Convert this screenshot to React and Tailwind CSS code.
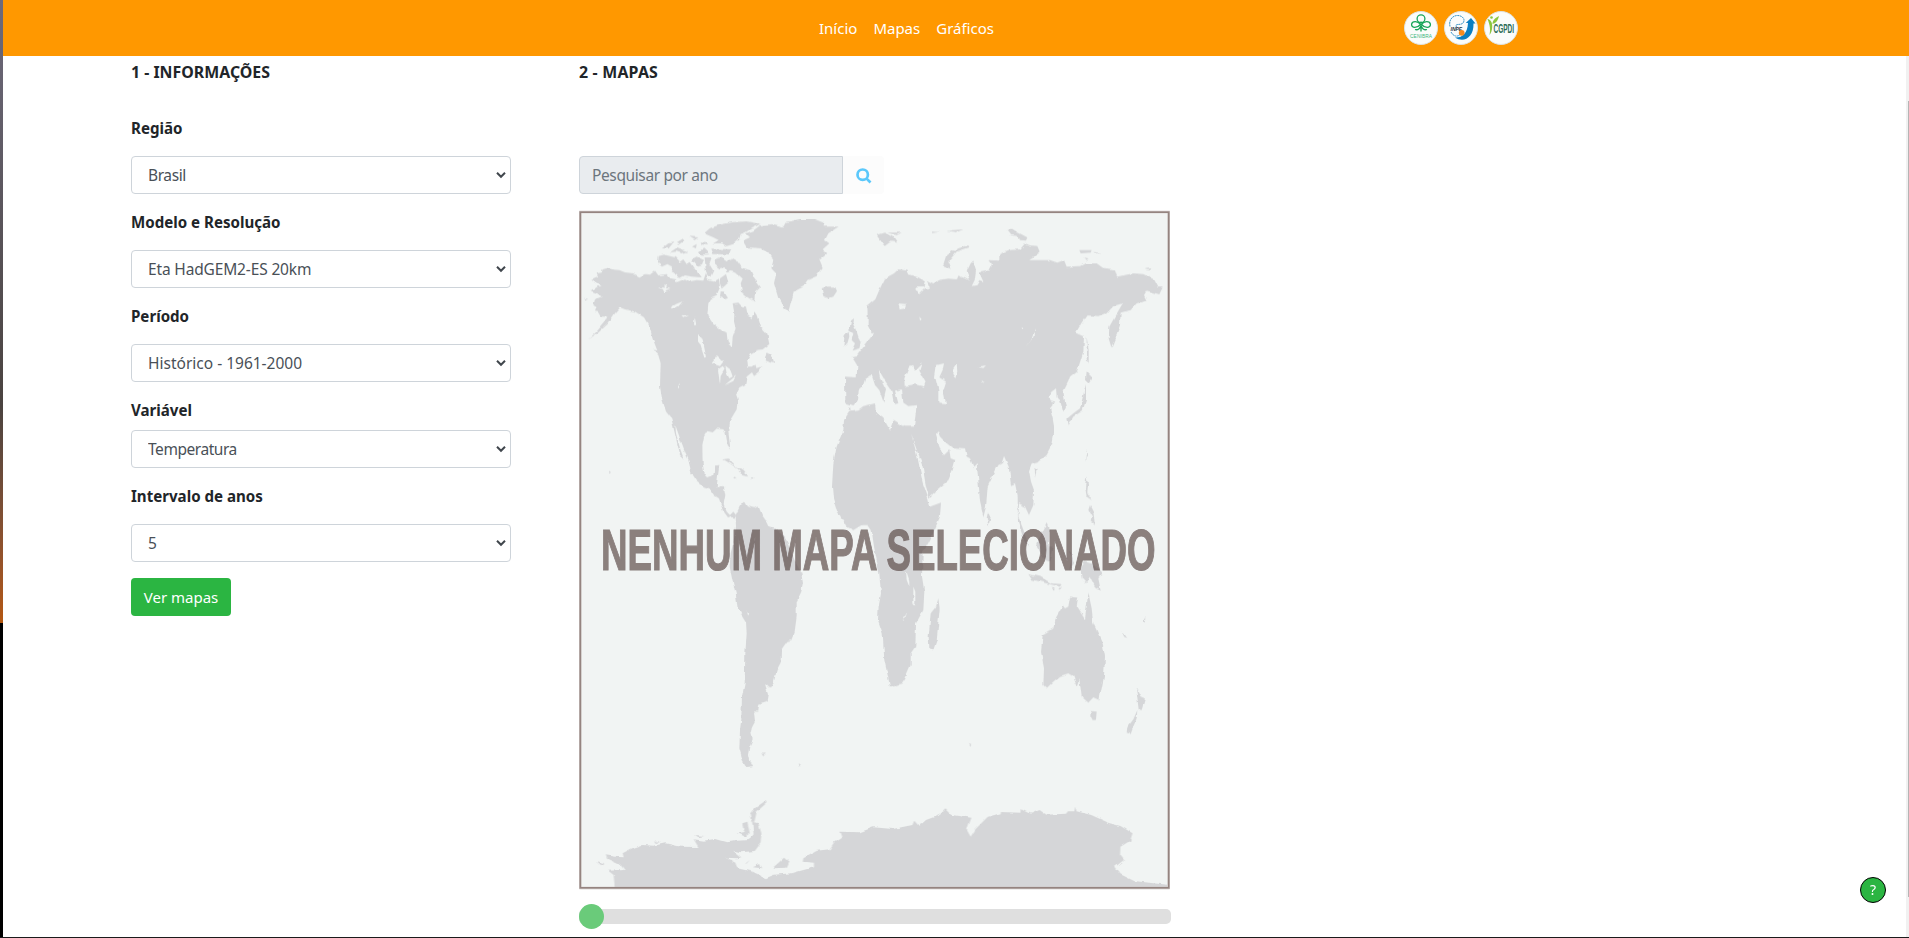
import React from "react";

const fields = [
  { label: "Região", value: "Brasil", gap: "mt-4", tracking: "tracking-[-0.4px]" },
  { label: "Modelo e Resolução", value: "Eta HadGEM2-ES 20km", gap: "mt-4", tracking: "tracking-[-0.15px]" },
  { label: "Período", value: "Histórico - 1961-2000", gap: "mt-4", tracking: "tracking-[0px]" },
  { label: "Variável", value: "Temperatura", gap: "mt-2", tracking: "tracking-[-0.45px]" },
  { label: "Intervalo de anos", value: "5", gap: "mt-4", tracking: "tracking-[0px]" },
];

function Field({ label, value, gap, tracking }) {
  return (
    <div className="mb-4 flex flex-col">
      <label className="h-6 text-[15.1px] font-bold leading-[25px] text-[#212529]">{label}</label>
      <div className={"grid h-[38px] items-center " + gap}>
        <select
          defaultValue={value}
          className={"col-start-1 row-start-1 h-[38px] w-full appearance-none rounded border border-[#ced4da] bg-white pl-4 pt-0.5 text-[15.5px] text-[#495057] " + tracking}
        >
          <option>{value}</option>
        </select>
        <svg className="pointer-events-none col-start-1 row-start-1 mr-[5px] justify-self-end" width="10" height="8" viewBox="0 0 10 8" fill="none" stroke="#40464c" strokeWidth="2">
          <path d="M1 1.8 5 5.8 9 1.8" />
        </svg>
      </div>
    </div>
  );
}

function CenibraLogo() {
  return (
    <svg width="34" height="34" viewBox="0 0 34 34">
      <circle cx="17" cy="17" r="16.5" fill="#fbfcfb" stroke="#dfe3e0" />
      <g fill="none" stroke="#17a559" strokeWidth="1.3">
        <circle cx="17" cy="7.8" r="3.9" />
        <path d="M16.5 13.5C14 9.8 8.2 9.7 7.6 13.2 7.3 17.4 13.2 17.3 16.5 13.500ZM17.5 13.500C20 9.800 25.800 9.700 26.400 13.200 26.700 17.400 20.800 17.300 17.500 13.500Z" />
        <path d="M17 10.500v10M11 18.500c3 1 5.200-1 6-4 .8 3 3 5 6 4" />
      </g>
      <text x="6" y="26.500" fontFamily="Liberation Sans, sans-serif" fontSize="4.800" fill="#3bb57b" textLength="22">CENIBRA</text>
    </svg>
  );
}

function InpeLogo() {
  return (
    <svg width="34" height="34" viewBox="0 0 34 34">
      <circle cx="17" cy="17" r="16.5" fill="#fbfcfb" stroke="#dfe3e0" />
      <path d="M11 26.500c7 .5 12.500-4 13-14.500h-2.200L27 7l4.500 5.500h-2C30 27 19.500 32 11 26.500Z" fill="#0b7fc2" />
      <path d="M6 15.500C4.500 9 8.500 4.500 13.500 4.500c5.500 0 8.500 4.500 5 8-3 2-8-.5-6 3.500M7 21c2 4 6 5.500 9 2.500" fill="none" stroke="#3a95c8" strokeWidth="1" strokeDasharray="2 .5" />
      <text x="6.500" y="19.800" fontFamily="Liberation Sans, sans-serif" fontWeight="700" fontStyle="italic" fontSize="5" fill="#22303a">INPE</text>
      <circle cx="17.700" cy="21.800" r="2.900" fill="#f58b1f" />
    </svg>
  );
}

function CgpdiLogo() {
  return (
    <svg width="34" height="34" viewBox="0 0 34 34" className="overflow-visible">
      <circle cx="17" cy="17" r="16.5" fill="#fbfcfb" stroke="#dfe3e0" />
      <path d="M3.500 8c3.500.5 5 4 4.700 8C8 20 7 22 5.500 24c1-5 .8-9-2-16ZM8.500 13c0-3.500 3-6.500 6.500-8-1 4-2.500 7-6.500 8Z" fill="#8cc63f" />
      <circle cx="7.500" cy="6.500" r="1.300" fill="#8cc63f" />
      <text x="9.500" y="22" fontFamily="Liberation Sans, sans-serif" fontWeight="700" fontSize="13" fill="#2b6b56" textLength="20.500" lengthAdjust="spacingAndGlyphs">CGPDI</text>
    </svg>
  );
}

function WorldMap() {
  return (
    <svg className="block overflow-visible" width="592" height="680" viewBox="27 30 1776 2040" role="img">
      <defs>
        <filter id="coast" x="0" y="0" width="1" height="1">
          <feTurbulence type="fractalNoise" baseFrequency="0.045" numOctaves="2" seed="4" result="n" />
          <feDisplacementMap in="SourceGraphic" in2="n" scale="11" xChannelSelector="R" yChannelSelector="G" />
        </filter>
      </defs>
      <rect x="31" y="36" width="1766" height="2032" fill="#f1f4f3" />
      <g filter="url(#coast)">
      <g fill="#d5d6d8">
        <path d="M64 240 84 232 80 220 95 218 98 208 112 204 130 209 148 210 165 217 190 220 208 230 225 222 240 224 255 212 265 226 290 222 300 234 318 238 320 247 345 236 360 244 380 240 400 242 408 218 415 240 432 245 447 236 450 262 440 285 425 292 415 310 412 345 430 372 455 390 470 398 473 425 486 440 488 410 497 385 492 365 493 340 488 310 505 308 515 318 528 320 533 345 545 357 553 335 560 345 570 378 592 404 598 432 578 448 560 450 543 460 530 485 545 470 560 462 553 485 560 505 577 500 568 516 552 528 546 517 530 530 526 553 508 562 498 582 503 596 500 628 487 650 476 668 475 695 481 745 473 735 467 700 460 688 440 686 428 697 412 693 402 710 397 735 398 790 403 820 414 832 430 826 434 797 448 795 440 860 462 862 466 885 461 912 470 935 480 945 490 935 498 945 494 960 485 948 474 952 458 930 447 895 432 885 418 865 402 860 380 842 362 815 356 780 345 755 330 715 316 675 318 700 330 745 341 775 330 765 318 715 304 655 288 635 276 595 270 560 272 490 265 465 250 448 262 452 250 420 238 380 222 352 195 335 165 328 150 322 135 340 115 370 85 398 55 418 80 395 105 365 112 350 92 350 84 336 75 335 80 322 70 315 75 298 95 290 82 280 62 272 80 260 95 258Z" />
        <path d="M266 168 282 164 315 172 328 186 340 178 350 192 362 186 378 210 392 232 365 230 345 226 330 234 320 222 302 215 306 200 292 192 276 200 264 190Z M364 178 380 170 402 180 396 196 384 200 374 186Z M404 172 425 172 418 192 430 212 420 232 408 215Z M434 178 452 172 470 184 495 174 515 202 542 212 552 235 570 260 555 275 553 305 530 290 516 278 512 250 518 236 498 218 482 214 470 218 464 202 448 205 436 195Z M450 235 468 222 475 248 455 266 450 250Z M452 274 462 275 474 294 464 298 450 293Z M385 155 400 146 418 163 395 164Z M424 146 484 148 478 163 430 162Z M276 145 295 130 310 128 296 145Z M300 157 322 142 355 155 336 160 320 155Z M318 126 336 116 340 124 328 132Z M358 110 385 112 374 120Z M366 140 380 132 378 145Z M392 125 408 126 414 136 395 133Z M402 100 420 84 450 74 490 66 530 64 572 72 545 84 528 96 512 102 508 116 490 132 470 138 456 130 430 130 446 120 430 112Z" />
        <path d="M518 122 540 112 528 100 550 92 570 76 610 72 640 80 648 66 690 58 735 58 760 68 758 80 806 80 775 100 765 120 778 130 758 148 772 160 748 180 758 205 740 228 712 240 700 260 672 275 665 300 656 335 640 322 625 295 612 250 618 220 604 205 610 180 596 158 575 145 530 142Z" />
        <path d="M755 265 770 260 795 260 801 273 790 290 775 295 760 288Z M42 294 54 297 48 300Z M843 362 852 355 850 374 860 395 872 430 868 445 845 452 855 430 845 420 850 400 838 392Z M824 405 836 392 838 410 832 430 820 438Z M590 455 604 462 612 490 596 486 584 482Z M460 778 474 776 502 805 520 812 535 830 517 826 500 804 480 790Z M490 830 500 833 492 836Z M542 832 551 833 546 837Z M118 808 122 818 118 823Z" />
        <path d="M497 945 510 918 522 905 530 918 555 925 566 920 576 945 590 965 596 978 612 985 645 1010 665 1060 678 1090 694 1118 699 1150 694 1175 680 1205 680 1250 674 1295 664 1320 652 1323 633 1350 632 1388 620 1410 607 1458 597 1462 585 1452 594 1480 590 1502 567 1512 565 1535 552 1535 555 1565 546 1582 541 1603 549 1615 538 1640 534 1665 538 1685 551 1698 530 1702 518 1680 508 1645 510 1590 514 1558 516 1490 524 1450 526 1360 530 1300 528 1265 503 1225 497 1180 487 1140 479 1100 482 1060 492 1020 498 980Z M574 1662 588 1660 580 1668Z M686 1690 694 1695 688 1698Z" />
        <path d="M893 345 892 318 916 298 930 265 945 235 972 220 985 208 1012 212 1018 224 1045 232 1065 245 1060 262 1035 262 1048 282 1065 265 1080 264 1070 240 1090 250 1108 240 1135 236 1160 238 1165 224 1185 232 1200 240 1190 215 1202 190 1210 182 1218 210 1214 240 1205 258 1220 255 1228 240 1240 245 1228 218 1258 212 1266 195 1255 180 1288 182 1288 162 1315 150 1350 148 1365 130 1380 136 1405 138 1412 155 1378 180 1440 180 1462 188 1482 180 1490 200 1530 198 1545 190 1580 190 1600 204 1635 208 1642 230 1690 220 1720 222 1752 238 1765 262 1778 262 1768 283 1730 272 1722 285 1730 302 1700 310 1682 330 1652 338 1650 375 1640 402 1624 442 1616 415 1618 380 1632 355 1658 310 1630 318 1612 338 1585 348 1550 346 1535 368 1518 398 1542 408 1540 455 1522 512 1500 530 1495 545 1480 575 1488 622 1480 638 1470 600 1460 590 1458 565 1445 575 1435 590 1443 602 1456 605 1440 625 1448 655 1454 690 1447 730 1430 762 1405 785 1385 790 1377 812 1383 845 1392 870 1390 915 1377 945 1365 920 1347 910 1345 950 1368 1010 1375 1040 1360 1015 1344 965 1343 890 1335 850 1323 855 1316 800 1302 768 1295 790 1285 795 1270 825 1253 860 1248 920 1240 952 1230 905 1225 840 1220 790 1210 800 1200 775 1190 770 1185 745 1145 742 1128 728 1110 710 1102 690 1098 705 1108 740 1122 765 1138 750 1142 775 1156 780 1148 810 1135 840 1100 870 1078 893 1068 860 1058 800 1035 735 1022 695 1042 770 1058 848 1075 895 1080 920 1113 908 1110 950 1085 1010 1058 1060 1056 1130 1063 1175 1060 1230 1038 1270 1036 1340 1022 1360 1022 1395 1005 1435 995 1450 960 1462 954 1430 943 1380 938 1300 924 1260 926 1220 933 1180 928 1120 912 1040 905 990 895 975 875 975 850 990 830 980 812 950 798 925 789 895 786 860 790 790 800 740 820 690 822 660 838 635 862 632 880 618 915 610 918 638 940 655 960 690 972 660 1005 680 1032 680 1040 615 1015 618 1000 608 996 568 975 572 985 610 972 612 965 575 945 545 926 512 930 535 948 570 940 605 928 570 915 555 905 525 885 538 878 560 866 572 864 600 850 616 826 608 825 530 860 532 862 500 845 472 860 468 870 455 900 415 912 400 908 370 918 348 928 360 926 390 950 385 946 350 960 310 972 280 985 268 988 290 970 315 975 340 1010 335 972 350 970 385 955 402 938 405 920 398 905 400 893 375Z" />
        <path d="M840 618 842 632 835 628Z M920 105 945 98 970 110 982 128 962 125 944 138 930 120Z M955 98 995 98 980 105Z M1088 92 1110 93 1090 96Z M1130 92 1180 88 1160 96Z M1118 200 1128 168 1155 148 1195 136 1198 142 1160 155 1135 185 1145 210Z M1310 92 1325 86 1345 98 1372 112 1368 122 1350 120 1345 108 1320 105Z M1528 150 1565 150 1562 158 1532 160Z M1570 156 1592 158 1575 160Z M1540 173 1556 176 1548 180Z M1725 204 1745 202 1740 208Z M1550 410 1556 450 1556 490 1550 475Z M1550 515 1566 532 1556 548 1548 540Z M1548 552 1548 600 1538 632 1510 650 1496 675 1492 655 1510 640 1530 625Z M1549 750 1551 765 1546 785Z M1390 805 1400 810 1395 832Z M1549 830 1554 850 1552 880 1565 900 1550 890 1545 860Z M1254 935 1262 955 1256 978 1250 955Z M1105 1195 1109 1225 1100 1320 1090 1350 1078 1345 1076 1310 1082 1240 1098 1220Z" />
        <path d="M1430 970 1438 990 1436 1040 1448 1040 1438 1085 1425 1080 1400 1040 1405 1020Z M1375 1122 1410 1130 1445 1150 1475 1152 1470 1160 1430 1150 1385 1138Z M1445 1160 1455 1168 1450 1172Z M1465 1170 1476 1158 1470 1172Z M1495 1050 1505 1060 1512 1090 1498 1110 1505 1070Z M1560 915 1570 935 1575 975 1562 965 1566 950 1555 930Z M1532 1105 1545 1085 1570 1092 1595 1122 1585 1135 1592 1170 1575 1160 1560 1130 1548 1150 1535 1135Z" />
        <path d="M1418 1305 1450 1285 1458 1250 1478 1215 1485 1225 1495 1220 1500 1190 1525 1193 1520 1220 1545 1258 1555 1178 1565 1225 1570 1270 1598 1330 1605 1370 1602 1430 1588 1500 1570 1492 1555 1508 1535 1490 1528 1435 1520 1458 1510 1430 1495 1420 1470 1428 1450 1445 1430 1464 1420 1455 1422 1405 1413 1355Z M1565 1533 1580 1535 1578 1558 1572 1565 1564 1550Z M1698 1462 1712 1490 1725 1495 1715 1530 1706 1528Z M1702 1530 1700 1555 1690 1580 1682 1602 1670 1598 1672 1582 1690 1558Z M1655 1290 1672 1315 1662 1310Z M1720 1260 1726 1248 1725 1265Z M1196 1632 1204 1635 1202 1640Z" />
      </g>
      <g fill="#f1f4f3">
        <path d="M264 262 280 263 292 253 288 264 302 266 285 272 280 278 276 268Z M302 322 318 312 338 304 326 318 308 328Z M334 346 354 344 340 351Z M374 350 379 375 372 375Z M384 402 398 418 408 468 402 470 390 432 384 425Z M425 490 442 467 460 485 450 498Z M444 508 458 498 464 505 452 525 450 556Z M466 500 482 512 488 530 478 535 470 520Z M464 555 498 527 490 543Z M324 548 328 562 322 560Z M532 480 552 456 590 450 582 470 562 490 548 500 534 500Z" />
        <path d="M1018 498 1030 495 1035 512 1055 490 1048 512 1067 545 1062 560 1035 553 1004 558 1003 535Z M1100 495 1122 490 1118 510 1108 532 1128 545 1120 570 1128 610 1105 608 1105 570 1095 530Z M1148 510 1160 492 1162 515 1156 535 1147 522Z M1222 500 1248 496 1240 504 1230 502Z M1395 385 1394 410 1370 440 1384 420Z M1234 546 1244 545 1238 550Z M1448 606 1451 612 1447 615Z M1048 350 1055 358 1050 362Z M985 310 1008 312 1004 326 990 328Z M1355 382 1360 385 1357 390Z" />
        <path d="M1008 1110 1018 1140 1018 1160 1010 1140Z M1030 1160 1036 1175 1036 1215 1030 1215Z M530 1230 538 1242 534 1246Z M998 1260 1008 1235 1002 1262Z" />
      </g>
      <g transform="translate(0 1740) scale(1.167 1)">
        <path fill="#d5d6d8" d="M115 322 112 285 98 272 140 270 130 255 95 236 92 226 115 230 138 232 135 220 160 205 185 195 215 197 245 190 285 200 330 201 318 178 345 182 375 177 405 187 430 182 460 180 472 160 468 125 484 130 492 160 490 190 475 213 440 217 420 212 440 232 430 235 400 233 425 248 430 265 470 275 503 295 525 284 570 280 600 270 627 262 627 248 598 245 600 235 635 212 667 208 680 185 700 170 695 155 745 157 780 142 830 147 880 135 885 122 897 138 915 120 950 105 965 88 980 105 1032 113 1020 150 1030 170 1042 148 1070 115 1107 103 1108 96 1160 98 1162 88 1185 101 1207 90 1225 104 1275 101 1280 94 1296 94 1299 80 1302 94 1340 105 1385 129 1415 138 1446 160 1440 182 1415 200 1414 225 1424 240 1400 262 1415 283 1450 303 1534 314V326H115Z M466 125 462 105 475 85 505 60 508 66 480 95 474 125Z M520 265 550 233 562 245 555 263Z M68 243 88 250 80 256Z M443 130 456 125 462 160 450 170 432 160 452 155 445 145Z M219 180 230 188 222 188Z M322 165 345 168 330 172Z M450 252 462 240 455 250Z M488 252 494 265 470 262Z M400 238 420 240 405 246Z" />
      </g>
      </g>
      <rect x="31" y="36" width="1765" height="2028" fill="none" stroke="#b9aeab" strokeWidth="7" />
      <rect x="31" y="37" width="1765" height="2026" fill="none" stroke="#958480" strokeWidth="4" />
      <g opacity=".67">
        <text x="93" y="1109" fontFamily="Liberation Sans, Arial, sans-serif" fontWeight="700" fontSize="172" fill="#584644" stroke="#584644" strokeWidth="3.500" textLength="1664" lengthAdjust="spacingAndGlyphs">NENHUM MAPA SELECIONADO</text>
      </g>
    </svg>
  );
}

export default function App() {
  return (
    <div className="flex h-[938px] w-full flex-col overflow-hidden bg-white font-['Noto_Sans','Segoe_UI',sans-serif]">
      <div className="flex min-h-0 flex-1">
        <div className="flex w-[3px] flex-col">
          <div className="h-[623px] bg-linear-to-b from-[#6d6a7c] via-[#4a4340] via-65% to-[#b4570f]" />
          <div className="flex-1 bg-black" />
        </div>
        <div className="flex flex-1 flex-col">
          <header className="flex h-14 items-center bg-[#ff9800] pl-[816px]">
            <nav className="flex w-[585px] gap-4 text-[15px] text-white">
              <a>Início</a>
              <a>Mapas</a>
              <a>Gráficos</a>
            </nav>
            <div className="flex gap-1.5">
              <CenibraLogo />
              <InpeLogo />
              <CgpdiLogo />
            </div>
          </header>
          <div className="flex flex-1">
            <main className="flex flex-1 pl-32">
              <section className="w-[380px]">
                <h2 className="mt-1 h-6 text-[15.9px] font-bold leading-[25px] text-[#212529]">1 - INFORMAÇÕES</h2>
                <form className="mt-8">
                  {fields.map((f) => (
                    <Field key={f.label} {...f} />
                  ))}
                  <button type="button" className="h-[38px] w-[100px] rounded bg-[#2bb542] text-[15px] text-white">Ver mapas</button>
                </form>
              </section>
              <section className="ml-[68px] flex w-[592px] flex-col">
                <h2 className="mt-1 h-6 text-[15.9px] font-bold leading-[25px] tracking-[0.2px] text-[#212529]">2 - MAPAS</h2>
                <div className="mt-[72px] flex h-[38px]">
                  <input
                    disabled
                    placeholder="Pesquisar por ano"
                    className="w-[264px] rounded-l border border-[#ced4da] bg-[#e9ecef] px-3 pt-0.5 text-[15.5px] tracking-[-0.38px] placeholder:text-[#6c757d]"
                  />
                  <button type="button" className="flex w-[41px] items-center justify-center rounded-r bg-[#fcfcfc] pt-px">
                    <svg width="16" height="16" viewBox="0 0 16 16" fill="none" stroke="#5bc8fb" strokeWidth="2.700">
                      <circle cx="6.700" cy="6.700" r="5.200" />
                      <path d="m10.600 10.600 3.900 3.900" />
                    </svg>
                  </button>
                </div>
                <div className="mt-4">
                  <WorldMap />
                </div>
                <div className="mt-3.5 flex h-[25px] items-center">
                  <div className="z-10 size-[25px] rounded-full bg-[#6acb7a]" />
                  <div className="-ml-[25px] h-[15px] flex-1 rounded-[5px] bg-[#dfdfdf]" />
                </div>
              </section>
              <aside className="flex flex-1 items-end justify-end pb-[34px] pr-5">
                <button type="button" className="flex size-[26px] items-center justify-center rounded-full border border-black bg-[#2bb542] text-sm text-white">?</button>
              </aside>
            </main>
            <div className="flex w-[3px] flex-col items-end bg-[#f1f1f1] pt-[45px]">
              <div className="h-[796px] w-px bg-[#b5b5b5]" />
            </div>
          </div>
        </div>
      </div>
      <footer className="h-px bg-[#1b1b1b]" />
    </div>
  );
}
